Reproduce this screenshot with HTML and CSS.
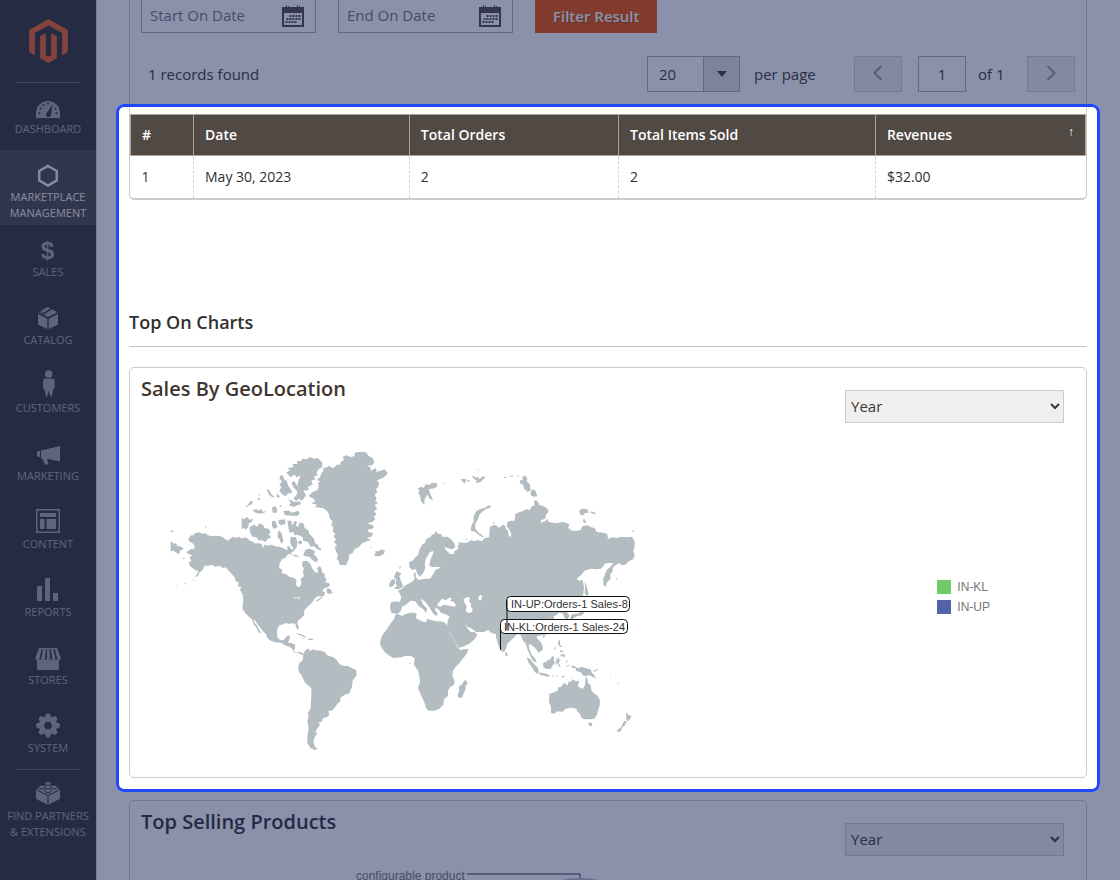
FILE: index.html
```html
<!DOCTYPE html>
<html lang="en">
<head>
<meta charset="utf-8">
<title>Marketplace Dashboard</title>
<link rel="stylesheet" href="styles.css">
</head>
<body>
<div class="app">
  <nav class="sidebar" aria-label="Main">
    <a class="logo" href="#" aria-label="Magento">
      <svg viewBox="88 57 116 132"><path d="M146 57l58 33v66l-17 10V99l-41-23-41 23v67l-17-10V90z"/><path d="M121 108l17-9v66l8 5 8-5V99l17 9v67l-25 14-25-14z"/></svg>
    </a>
    <ul class="menu">
      <li class="item ruled"><a href="#">
        <svg viewBox="0 0 32 32"><path d="M4 28v-5a12 12 0 0 1 24 0v5z"/><g class="cut"><circle cx="7.500" cy="23" r="1"/><circle cx="8.500" cy="18.500" r="1"/><circle cx="11.500" cy="15" r="1"/><circle cx="16" cy="13.500" r="1"/><circle cx="24.500" cy="23" r="1"/><circle cx="23.500" cy="18.500" r="1"/><path d="M20.500 14.500l-1.500 10a2.500 2.500 0 1 1-4-2z"/></g></svg>
        <span>Dashboard</span></a></li>
      <li class="item active"><a href="#">
        <svg viewBox="0 0 32 32"><path class="line" d="M16 8l8.700 4.900v9.700L16 27.500l-8.700-4.900v-9.700z"/></svg>
        <span>Marketplace Management</span></a></li>
      <li class="item"><a href="#">
        <svg viewBox="0 0 32 32"><text class="dollar" x="15.500" y="26" text-anchor="middle">$</text></svg>
        <span>Sales</span></a></li>
      <li class="item"><a href="#">
        <svg viewBox="0 0 32 32"><path d="M15.500 6l3 1.500-8.500 5.500-3.500-1.700zM20 8.300l5.500 3L16 16l-4.500-2.200zM6 13l9.300 4.800V28L6 23.500zM26 13v10.500L16.700 28V17.800z"/><path class="slit" d="M8 10.500l4 2 8-5"/></svg>
        <span>Catalog</span></a></li>
      <li class="item"><a href="#">
        <svg viewBox="0 0 32 32"><circle cx="16.700" cy="5" r="3.800"/><path d="M12.500 9.500h8.500l1.700 2v8h-1.500v1l-1.500 7.200h-1L16.800 22l-1.700 5.700h-1L12.500 20.500v-1H11v-8z"/></svg>
        <span>Customers</span></a></li>
      <li class="item"><a href="#">
        <svg viewBox="0 0 32 32"><path d="M5 14.500l3-.6v6.200l-3-.6zM9 13.500l19-4.500v15.500L16 22l-1 0 1.500 5-3.500 1-2.500-6.500H9z"/></svg>
        <span>Marketing</span></a></li>
      <li class="item"><a href="#">
        <svg viewBox="0 0 32 32"><path fill-rule="evenodd" d="M4 4h24v24H4zM5.500 5.500v21h21v-21z"/><path d="M8 8h16v4H8zM8 14h4.500v10H8zM14.500 14H24v10h-9.500z"/></svg>
        <span>Content</span></a></li>
      <li class="item"><a href="#">
        <svg viewBox="0 0 32 32"><path d="M5 13h5v15H5zM13 5h5v23h-5zM21 20h5v8h-5z"/></svg>
        <span>Reports</span></a></li>
      <li class="item"><a href="#">
        <svg viewBox="0 0 32 32"><path d="M6.500 7h19v1.500h-19zM5 18.500h22V29H5z"/><path d="M6.500 8.500h3L7.500 18l-1.500 1H4.500L3 17.500zM11 8.500h3L13 18l-1 1h-1.500L9 17.500zM15 8.500h2.500l.5 9-1 1.500h-1.500l-1-1.500zM19 8.500h2.500l2 9-1 1.500H21l-1-1.500zM23 8.500h2.500l3.500 9-1.500 1.500H26l-1-1.500z"/><path class="slit" d="M10 9l-1.800 9M14.500 9l-.5 9M18.300 9l.8 9M22.300 9l2 9"/></svg>
        <span>Stores</span></a></li>
      <li class="item"><a href="#">
        <svg viewBox="0 0 32 32"><g transform="translate(16 16.500)"><circle r="9"/><g id="teeth"><path d="M-3.200-8l1.500-3.900h3.400L3.200-8v16l-1.500 3.900h-3.400L-3.200 8z"/><path d="M-8-3.200l-3.900 1.500v3.400L-8 3.200H8l3.900-1.500v-3.400L8-3.200z"/></g><use href="#teeth" transform="rotate(45)"/><circle class="cut" r="3.800"/></g></svg>
        <span>System</span></a></li>
      <li class="item ruled"><a href="#">
        <svg viewBox="0 0 32 32"><path d="M4 12.500L16 6l12 6.500v9.200L16 28 4 21.700z"/><path class="slit" d="M4 12.500l12 6 12-6M16 18.500V28"/><g class="stud"><ellipse cx="16" cy="6.500" rx="3.300" ry="2"/><ellipse cx="10" cy="10" rx="3.300" ry="2"/><ellipse cx="22" cy="10" rx="3.300" ry="2"/><ellipse cx="16" cy="13.500" rx="3.300" ry="2"/></g></svg>
        <span>Find Partners &amp; Extensions</span></a></li>
    </ul>
  </nav>

  <main class="main">
    <section class="report-head">
      <form class="filters">
        <label class="date"><input type="text" placeholder="Start On Date" aria-label="Start On Date">
          <svg class="cal" viewBox="0 0 22 22"><path fill-rule="evenodd" d="M0 2h22v20H0zM2 8v12h18V8z"/><path d="M7.500 10h2v2h-2zM10.500 10h2v2h-2zM13.500 10h2v2h-2zM16.500 10h2v2h-2zM4.500 13h2v2h-2zM7.500 13h2v2h-2zM10.500 13h2v2h-2zM13.500 13h2v2h-2zM16.500 13h2v2h-2zM3.500 16h2v2h-2zM6.500 16h2v2h-2zM9.500 16h2v2h-2zM12.500 16h2v2h-2z"/><path class="ring" d="M4.500 0v4.500h2V1M15.500 0v4.500h2V1"/></svg></label>
        <label class="date"><input type="text" placeholder="End On Date" aria-label="End On Date">
          <svg class="cal" viewBox="0 0 22 22"><path fill-rule="evenodd" d="M0 2h22v20H0zM2 8v12h18V8z"/><path d="M7.500 10h2v2h-2zM10.500 10h2v2h-2zM13.500 10h2v2h-2zM16.500 10h2v2h-2zM4.500 13h2v2h-2zM7.500 13h2v2h-2zM10.500 13h2v2h-2zM13.500 13h2v2h-2zM16.500 13h2v2h-2zM3.500 16h2v2h-2zM6.500 16h2v2h-2zM9.500 16h2v2h-2zM12.500 16h2v2h-2z"/><path class="ring" d="M4.500 0v4.500h2V1M15.500 0v4.500h2V1"/></svg></label>
        <button class="primary" type="button">Filter Result</button>
      </form>
      <div class="pager">
        <span class="found">1 records found</span>
        <div class="size"><input id="size" type="text" value="20"><button type="button" aria-label="Choose page size"><svg viewBox="0 0 10 6"><path d="M0 0h10L5 6z"/></svg></button></div>
        <label class="per" for="size">per page</label>
        <button class="step" type="button" aria-label="Previous page"><svg viewBox="0 0 10 16"><path d="M8.500 1L1.500 8l7 7"/></svg></button>
        <input id="page" class="page" type="text" value="1">
        <label class="of" for="page">of 1</label>
        <button class="step" type="button" aria-label="Next page"><svg viewBox="0 0 10 16"><path d="M1.500 1l7 7-7 7"/></svg></button>
      </div>
    </section>

    <section class="focus">
      <div class="grid">
        <table>
          <colgroup><col class="c1"><col class="c2"><col class="c3"><col class="c4"><col class="c5"></colgroup>
          <thead><tr><th>#</th><th>Date</th><th>Total Orders</th><th>Total Items Sold</th><th><div class="sorted">Revenues<span>↑</span></div></th></tr></thead>
          <tbody><tr><td>1</td><td>May 30, 2023</td><td>2</td><td>2</td><td>$32.00</td></tr></tbody>
        </table>
      </div>
      <h2 class="heading">Top On Charts</h2>
      <article class="card">
        <header class="card-head">
          <h3>Sales By GeoLocation</h3>
          <select aria-label="Sales period"><option>Year</option></select>
        </header>
        <div class="geo">
          <svg class="map" viewBox="165 445 480 310" role="img" aria-label="World sales map">
            <g class="land">
              <g transform="translate(160 440) scale(.33333)">
                <path d="M88 292L94 286 101 286 105 280 118 277 128 281 139 280 142 286 158 289 166 287 178 288 186 290 196 298 204 302 210 297 218 290 228 293 240 290 244 296 254 292 264 296 270 302 280 305 284 312 294 310 306 313 308 322 312 322 314 313 324 317 334 314 346 319 360 321 374 326 380 331 384 326 380 320 388 318 392 326 398 330 400 318 406 316 410 322 402 332 392 340 398 346 408 345 420 350 406 350 390 342 384 342 376 354 366 358 358 372 358 384 366 388 366 400 378 402 388 410 402 414 410 420 408 434 412 440 420 440 424 430 422 416 432 408 428 396 432 388 426 376 428 364 440 362 450 370 456 384 464 396 474 398 472 384 478 378 484 384 486 396 494 402 494 412 500 418 496 428 506 428 511 436 502 442 490 446 488 454 496 458 490 470 474 468 462 478 456 488 447 496 436 508 432 514 433 524 424 534 414 542 412 550 416 560 415 570 409 564 406 551 396 550 386 552 378 549 370 553 358 556 352 568 351 580 352 592 360 600 372 600 378 590 390 586 389 596 384 608 396 610 406 614 404 628 400 632 408 638 420 636 430 640 428 645 416 640 402 638 396 626 388 620 374 616 366 609 346 607 332 602 322 594 318 582 308 572 300 562 292 552 286 542 280 536 284 548 292 558 298 570 304 578 296 578 290 564 282 554 276 538 268 532 256 520 248 508 248 494 250 480 248 462 240 450 244 440 234 440 236 428 226 422 224 412 212 398 204 390 198 382 188 384 178 377 164 380 156 374 144 378 136 376 130 384 128 390 118 398 112 410 106 410 116 394 106 390 100 386 90 378 86 368 94 362 88 352 98 346 84 342 80 336 92 328 102 328 104 318 98 310 90 306 84 298z"/>
                <path d="M446 168L458 156 472 150 476 142 474 130 480 124 470 120 480 112 484 100 490 94 490 84 502 82 508 77 516 84 524 82 530 74 540 74 542 66 552 60 548 50 560 46 572 51 584 48 584 38 600 35 618 37 626 48 638 54 643 68 636 76 620 78 632 82 632 92 648 84 650 96 668 90 674 88 683 100 672 112 662 116 650 122 658 128 654 142 648 148 652 158 644 164 650 176 645 182 654 188 644 196 652 206 642 214 650 222 641 230 646 238 636 246 622 250 638 256 642 264 622 270 626 276 640 280 634 290 620 294 634 300 608 308 596 322 584 326 578 340 568 342 566 358 558 376 538 374 536 362 530 358 534 346 528 334 524 320 532 318 522 306 528 298 521 290 526 280 518 276 520 262 514 256 518 244 510 236 506 220 498 210 488 204 466 202 470 194 454 190 466 184 462 178z"/>
                <path d="M378 98L390 90 382 84 400 82 398 72 412 72 412 62 424 64 426 56 440 58 450 51 462 56 474 54 488 70 486 82 476 88 470 96 472 108 462 108 466 118 454 122 458 134 444 140 446 150 430 152 438 166 426 182 416 176 408 184 400 174 410 164 412 154 402 144 394 130 402 122 412 138 416 120 422 106 410 112 404 104 390 112 386 104zM362 105L370 108 372 118 380 122 384 136 394 150 396 160 384 160 378 168 368 164 358 152 364 142 358 134 366 124 358 116zM320 148L328 151 334 163 344 170 337 172 327 164zM350 160L358 168 358 174 350 171zM385 178L395 181 403 186 421 184 423 193 411 196 403 201 386 196 393 189zM295 162L303 164 297 167zM290 178L298 173 301 181zM256 200L264 195 270 184 278 184 276 193 268 196 260 202zM278 209L290 208 296 212 303 207 308 215 318 214 312 219 298 221 284 217zM336 203L346 198 352 210 350 218 338 218zM358 194L366 197 362 202zM370 213L388 212 395 218 416 212 419 222 411 228 375 226zM356 240L376 238 376 252 362 256 356 250zM336 244L346 242 353 262 341 266 336 258zM382 242L394 242 396 258 404 243 412 246 408 256 414 262 418 248 430 250 434 264 446 272 448 282 458 292 464 300 464 308 474 315 475 322 484 326 482 332 470 326 462 318 452 320 444 306 430 302 428 292 414 284 404 286 400 276 388 278zM356 270L364 278 370 302 364 312 358 296 352 290zM392 290L408 292 412 306 410 322 396 320 390 306zM245 235L253 237 261 231 269 239 278 236 276 245 266 250 266 258 258 270 253 264 245 267zM268 262L282 254 292 260 298 250 310 256 314 264 326 266 332 276 326 284 334 292 322 298 316 306 304 300 296 302 290 292 278 290 272 282zM415 303L423 301 427 309 417 314zM430 344L436 330 446 326 460 330 466 336 460 342 470 350 474 360 464 358 446 350 432 348zM450 354L466 352 474 364 466 366zM284 308L292 312 300 310 300 316 286 314zM32 302L41 311 49 310 51 317 63 320 71 326 60 333 58 342 48 338 41 332 32 334zM32 272L40 271 41 275 33 277zM68 354L73 353 74 357 69 357zM136 258h4v4h-4zM642 342L648 340 645 334 655 334 665 328 675 333 671 342 661 348 646 349zM632 320L638 323 634 325zM98 418L103 420 99 422zM74 430h4v3h-4zM49 434l3 2-3 2zM502 444L510 446 519 460 502 461 500 454zM468 482L484 471 486 474 470 485z"/>
              </g>
              <g transform="translate(160 580) scale(.33333)">
                <path d="M430 222l6-12 11-5 1 8 12-5 6 3 19 1 10 5 5 8 20 7 10 8 8 12 14 6 10-1 13 7 13 6 2 15-12 17-2 18-8 20-13 4-13 8-2 13-8 6-7 11-10 10-10 0 3 12-8 8-12 3-1 9-12 4 5 6-8 11-6 10 6 5-8 12-4 13 5 15 9 7-12 3-6-5-4 1-2-6-8-10 0-20 4-25-4-20 4-20-3-5 9-15 2-40 0-20-14-13-5-4-5-10-6-13-8-10-1-13 3-12 10-10z"/>
                <path d="M410 159l14 4 15 8-2 2-11-4-16-8zM446 175l14 2-2 3-12 0zM427 175h6v2h-6z"/>
              </g>
              <g transform="translate(370 440) scale(.33333)">
                <path d="M118 365L128 362 136 352 144 346 148 330 156 314 166 308 168 298 180 292 186 284 194 282 196 272 204 282 214 282 216 290 232 290 244 298 254 312 256 322 246 328 232 324 222 320 230 332 240 342 252 342 254 332 266 326 262 318 268 312 264 306 276 308 290 308 304 300 312 304 324 300 336 304 344 294 358 292 358 276 360 260 374 254 382 258 386 264 398 254 406 258 408 268 414 272 416 286 422 292 424 282 416 266 410 258 412 246 424 242 434 242 436 222 448 216 458 214 468 208 480 210 484 200 494 196 492 184 498 180 506 188 508 196 520 198 530 204 536 214 528 224 526 236 514 240 512 248 526 244 532 236 536 246 560 250 578 246 592 250 598 254 594 264 606 272 620 272 632 270 638 258 652 256 664 262 674 264 680 276 700 278 712 282 714 296 728 292 740 294 752 290 772 292 786 290 794 304 794 320 790 334 794 344 790 358 776 364 766 374 756 376 748 370 736 376 728 384 728 394 720 404 722 416 712 426 706 440 700 434 700 416 706 400 712 388 722 380 730 370 716 368 704 372 694 386 678 388 662 386 644 392 634 404 620 416 628 422 638 420 642 440 640 464 630 480 622 492 612 496 600 500 588 506 590 516 598 524 594 540 584 534 578 520 566 518 560 524 550 530 556 540 562 552 556 566 544 578 528 584 516 586 502 588 500 594 512 606 518 618 518 630 506 638 500 630 492 620 484 614 476 612 478 628 486 646 496 656 500 668 490 664 480 646 472 628 468 612 458 600 452 586 444 582 436 588 424 600 412 612 408 626 402 636 394 634 386 618 378 592 378 582 366 580 354 570 342 576 318 576 306 566 292 560 286 550 290 562 302 576 314 576 322 584 314 598 300 610 284 618 266 624 256 608 248 594 238 576 230 562 232 548 238 528 224 522 212 518 206 508 196 502 196 512 204 522 198 528 188 518 178 502 164 484 152 476 158 492 172 506 168 518 160 508 146 498 136 484 122 482 108 494 96 500 92 514 82 522 64 518 60 504 62 488 74 484 90 486 94 472 88 458 84 452 96 446 104 438 118 430 130 422 134 414 130 402 136 396 138 412 146 420 164 416 180 416 190 402 196 390 214 382 196 380 186 382 178 376 182 356 190 340 188 332 178 338 168 356 164 372 166 384 160 398 150 410 144 404 136 386 128 390 118 382z"/>
                <path d="M80 393l14 8-6 9 5 12 7 18-15 8-13-2 9-9-5-8 4-8-8-11zM58 430l6-10 11-3 0 13-6 9-11 2zM86 384l8-6-4 8zM302 270l3-15 6-10 0-16 8-16 12-6 13-2 8-7 10-3-1 8-14 5-10 7-8 8-5 14-8 15-1 12 7 10 6 6 14 10-5 2-14-10-7-7-12-2zM368 246l8 2-6 4zM286 298l5-3 0 6zM142 146l12-6 8 4 4-11 12 2 8-7 16 2-2 12-14 4-10 1 5 15 8 18-10-3-7-14-4 9-4 6-1 17-10-11-3-18-5-5 3-10zM222 128l3 0 0 4-3 0zM272 118l10-2 9 3-6 6 4 7-10-5zM290 120l10 1-4 6zM305 110l7-2 3 5 10-3 1 7 10-5 4-4 7 5-6 3-8 9-12 4-4-5 6-5-7 1zM322 88l5 1-3 3zM402 111h8v3h-8zM418 107l14 1-8 3zM440 105l8 2-2 3zM457 110l9-3 6 9-1 9 9 8 2 17-8 6-11-8-4-14-10-5 2-8 8-2zM485 149l10 0 3 9 4 10-9 3-9-4-3-8zM628 210l10-4 14 2 4 10-12 2-4 6-10-2zM662 214l10 3 8 6-10-1-9-5zM640 236l4 2 0 4 8 3-10 4-3-6zM786 274l5-4 2 7zM738 415l3 0 0 4-3 0zM644 425l4 8 4 14 4 14-6 8-6-10 1-18z"/>
              </g>
              <g transform="translate(370 580) scale(.33333)">
                <path d="M76 104L84 102 96 108 106 102 122 98 134 98 140 102 138 114 148 120 162 126 168 126 172 116 184 120 198 124 212 124 226 128 232 142 238 158 248 174 256 190 264 204 272 210 282 208 296 206 290 222 278 236 268 250 256 262 248 274 248 290 254 304 252 314 240 322 234 332 234 348 222 358 220 374 208 386 194 392 176 392 168 384 164 370 156 352 150 338 144 324 150 306 148 288 144 272 132 254 134 236 124 228 106 228 94 232 70 234 56 226 44 216 34 202 30 190 34 172 42 158 52 146 62 130 72 118z"/>
                <path d="M285 300l4 2 4 10-6 4-1 14-6 12-4 11-10 0-3-9 5-12-2-12 9-6zM118 248l4 0 0 3-4 0zM405 216l6 2 2 9-6 2zM538 342l10-4 14-5 3-11 8-1 5-8 8-4 6 8 4-12 10-2 0-5 12 5 10-1-3 10-1 7 8 5 7 2 6-12 2-24 5 6 3 15 7 4 2 16 9 10 7 4 7 10 3 8-1 14-4 11-4 16-8 12-12 2-12 0-10-2-7-9-4-9-5-1-4-10-6-2-12-2-15 4-8 8-16-1-10 7-9-2 0-18-6-16zM655 427l12 2-2 10-8-2zM633 410l4 1-2 3zM768 397l7 8 10 4-5 7-5 8-6-3 0-12zM763 422l8 2-8 14-8 5-2 11-12 2 2-7 10-7zM605 256l11 4 8 5 10-5 14 5 14 3 4 10 7 8 6 10-15-7-8-4-9 4-10-4-4-8-14-4-2-8-12-2zM670 272l8-2 3-5 2 5-10 6zM720 292l3-2-2 6zM744 306l3 2-2 6zM520 248l7-2 8-6 6-2 6-11 6 6-2 8 4 6-10 14-2 6-14-1-8-3-2-10zM470 232l10 5 9 12 12 11 5 10-2 12-10-6-8-14-10-14zM506 277l12 3 12 1 10 6-6 3-24-6zM545 286l8 2-6 2zM558 288l10-1-8 4zM575 290l12-4-9 8zM560 236l14-4-10 6 8 2-6 8 6 14-6-3-4-12-4 8-2-2zM588 240l4 4-3 6zM590 256l12 0-10 4zM566 180l4 2 0 12 8 7-8-1-7-9zM570 208l4 6 6-5-2 8-7 0zM574 222l12 2-2 8-6-3-7 0zM552 205l8-6-6 10zM518 168l5-3 2 6-7 2zM545 148l5-2-2 10-4-2zM603 106l8-4 16-2 10-10 5-14 4 2-2 18-8 10-16 3-10 6-4 6-5-7zM644 50l10 3 4 6-9 6-9-2z"/>
              </g>
            </g>
            <g class="water" transform="translate(370 580) scale(.33333)"><path d="M203 70l6-4 6-10 12 5 11-8 8 2-6 7 12 5 6 8-5 5-22-4-8-2-12 6-8-2zM280 58l12-7 8 3-3 10 7 7-2 8 6 8-2 10-10 2-9-6 3-14-5-8zM325 52l6-8 6 3-4 14-7 0z"/><path d="M-230 50l7 3 7-2-4 4-8 0zM-217 51l5 0 1 8-5-4z"/></g>
            <g class="tag">
              <rect x="506.500" y="596.500" width="123" height="15" rx="4"/>
              <rect x="500.500" y="619.500" width="127" height="14" rx="4"/>
              <path d="M507 600v30M500.500 624v26"/>
              <text x="511" y="608">IN-UP:Orders-1 Sales-8</text>
              <text x="504" y="631">IN-KL:Orders-1 Sales-24</text>
            </g>
          </svg>
          <ul class="legend">
            <li><i class="kl"></i>IN-KL</li>
            <li><i class="up"></i>IN-UP</li>
          </ul>
        </div>
      </article>
    </section>

    <article class="card products">
      <header class="card-head">
        <h3>Top Selling Products</h3>
        <select aria-label="Products period"><option>Year</option></select>
      </header>
      <div class="pie">
        <span>configurable product</span>
        <svg viewBox="0 0 240 120"><path class="lead" d="M0 5h113v8"/><circle cx="113" cy="110" r="101"/></svg>
      </div>
    </article>
  </main>
</div>
</body>
</html>
```
FILE: styles.css
```css
* { box-sizing: border-box; }

body {
  margin: 0;
  font: 14px/20px "Open Sans", "Noto Sans", sans-serif;
  color: #41362f;
  background: #fff;
}

ul { margin: 0; padding: 0; list-style: none; }
h2, h3 { margin: 0; font-weight: 600; }
input, button, select { font: inherit; color: inherit; border-radius: 0; margin: 0; }

.app { display: flex; height: 100vh; overflow: hidden; }

/* Sidebar */
.sidebar { flex: 0 0 97px; background: #373330; border-right: 1px solid #d6d3cc; }
.logo { display: flex; justify-content: center; padding: 19px 0; }
.logo svg { width: 39px; height: 44px; fill: #f26322; }
.item { min-height: 68px; }
.ruled { background: linear-gradient(#736e69, #736e69) center top / 66px 1px no-repeat; }
.item a {
  display: flex; flex-direction: column; align-items: center;
  padding: 8px 2px 4px; text-decoration: none; text-align: center;
  text-transform: uppercase; font-size: 11px; line-height: 16px; color: #a8a49f;
}
.item svg { width: 32px; height: 32px; margin-bottom: -1px; fill: currentColor; }
.item .cut { fill: #373330; }
.item .slit { fill: none; stroke: #373330; stroke-width: 1; }
.item .stud { stroke: #373330; stroke-width: 1; }
.item .line { fill: none; stroke: currentColor; stroke-width: 2.4; }
.dollar { font: bold 24px "Liberation Sans", sans-serif; }
.item.active { background: #4c4843; }
.item.active a { color: #f7f3eb; }

/* Main column */
.main { flex: 1; min-width: 0; padding: 0 20px 0 19px; }

.report-head {
  margin: 0 13px; padding: 0 11px 12px;
  border: solid #ccc; border-width: 0 1px;
}
.filters { display: flex; gap: 22px; }
.date { position: relative; width: 175px; }
.date input {
  display: block; width: 100%; height: 33px; padding: 0 40px 2px 8px;
  border: 1px solid #adadad; border-top: 0; background: none; font-size: 15px;
}
.date input::placeholder { color: #757575; opacity: 1; }
.cal { position: absolute; right: 12px; top: 5px; width: 22px; height: 22px; fill: #514943; }
.cal .ring { fill: none; stroke: #514943; stroke-width: 1; }
.primary {
  height: 33px; padding: 0 18px 2px; border: 0; background: #eb5202;
  color: #fff; font-size: 15px; font-weight: 600; text-shadow: 1px 1px 0 rgba(0, 0, 0, .25);
}

.pager { display: flex; align-items: center; margin-top: 23px; height: 36px; font-size: 15px; color: #41362f; }
.found { flex: 1; padding-left: 7px; }
.size { display: flex; width: 93px; height: 36px; border: 1px solid #adadad; }
.size input { width: 55px; border: 0; padding: 0 11px; background: none; }
.size button {
  flex: 1; display: grid; place-items: center; padding: 0;
  border: 0; border-left: 1px solid #adadad; background: #e3e3e3;
}
.size svg { width: 10px; height: 6px; fill: #41362f; }
.per { width: 62px; margin: 0 38px 0 14px; white-space: nowrap; }
.step { display: grid; place-items: center; width: 48px; height: 36px; padding: 0 0 2px; border: 1px solid #d0d0d0; background: #eee; }
.step svg { width: 10px; height: 16px; fill: none; stroke: #9a9592; stroke-width: 2; }
.page { width: 48px; height: 36px; margin: 0 12px 0 16px; padding: 0; border: 1px solid #adadad; background: none; text-align: center; }
.of { width: 27px; margin-right: 22px; white-space: nowrap; }

/* Highlighted region; its spread shadow dims the rest of the page */
.focus {
  position: relative; z-index: 1; padding: 0 10px 11px;
  border: 3px solid #1f49f5; border-radius: 8px;
  box-shadow: 0 0 0 2000px rgba(21, 35, 87, .5);
}
.grid { padding-top: 7px; border: 1px solid #ccc; border-top: 0; border-bottom-width: 2px; border-radius: 0 0 5px 5px; }
table { width: 100%; table-layout: fixed; border-collapse: collapse; }
.c1 { width: 6.6%; }
.c2 { width: 22.6%; }
.c3 { width: 21.9%; }
.c4 { width: 26.9%; }
.c5 { width: 22%; }
th, td { height: 42px; padding: 0 11px; text-align: left; }
th { height: 41px; background: #514943; color: #fff; font-weight: 600; border: 1px solid #aaa29b; }
td { color: #303030; border-left: 1px dashed #d6d6d6; }
td:first-child { border-left: 0; }
.sorted { display: flex; justify-content: space-between; }
.sorted span { font-size: 12px; line-height: 14px; }

.heading {
  margin: 108px 0 20px; padding-bottom: 9px; border-bottom: 1px solid #cac3b4;
  font-size: 18px; line-height: 29px; color: #303030;
}

.card { border: 1px solid #ccc; border-radius: 5px; padding: 0 22px 0 11px; }
.card-head { display: flex; justify-content: space-between; align-items: flex-start; }
.card-head h3 { padding-top: 7px; font-size: 20px; line-height: 28px; }
.card-head select { width: 219px; height: 33px; margin-top: 22px; padding: 0 1px; border: 1px solid #ccc; background: #efefef; font-size: 15px; }

.geo { display: flex; justify-content: space-between; align-items: center; padding: 22px 74px 22px 24px; }
.map { width: 480px; height: 310px; }
.land { fill: #b3bcc1; }
.water { fill: #fff; }
.tag { fill: #fff; stroke: #111; stroke-width: 1; }
.tag text { fill: #333; stroke: none; font: 11px "Liberation Sans", sans-serif; }
.legend { margin-bottom: 6px; font: 12px/20px "Liberation Sans", sans-serif; color: #777; }
.legend li { display: flex; align-items: center; gap: 6px; }
.legend i { width: 14px; height: 14px; }
.kl { background: #6fcc68; }
.up { background: #5563a8; }

.products { margin: 8px 13px 0; }
.products h3 { color: #303030; }
.pie { display: flex; gap: 2px; padding: 13px 0 0 215px; font: 12px/14px "Liberation Sans", sans-serif; color: #777; }
.pie svg { width: 240px; height: 120px; fill: #b7bccb; }
.pie .lead { fill: none; stroke: #333; }
```
